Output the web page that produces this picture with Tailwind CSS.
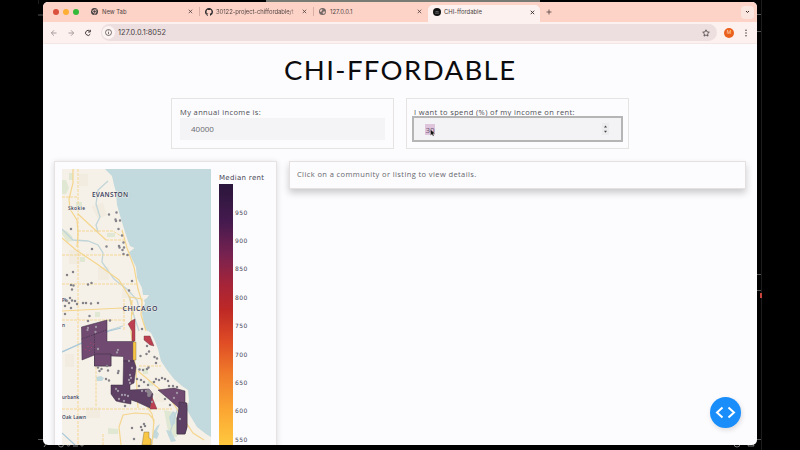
<!DOCTYPE html>
<html lang="en">
<head>
<meta charset="utf-8">
<title>CHI-ffordable</title>
<script src="https://cdn.jsdelivr.net/npm/@tailwindcss/browser@4"></script>
</head>
<body class="relative h-[450px] w-[800px] overflow-hidden bg-black font-['Lato',sans-serif]">
<!-- desktop edges behind the window -->
<svg class="absolute inset-0" width="800" height="450" viewBox="0 0 800 450" fill="none">
  <path d="M266 1H540" stroke="#777b74" stroke-width="2"/>
  <path d="M38 15h5M757 14.500h5M757 31.500h5M757 274.500h5M757 290.500h5M757 439.500h5M38 439.500h5" stroke="#555"/>
  <path d="M761.500 0V450M38.500 0V4" stroke="#1c1c1c"/>
  <path d="M760 293h2v5h-2z" fill="#c8433c"/>
  <g stroke="#8a8a8a" stroke-width=".9"><circle cx="61" cy="444.500" r="2.500"/><circle cx="68.500" cy="444.500" r="1.500"/><path d="M73 446h5M74 444h4M44 447l2-3"/><circle cx="82" cy="444.500" r="1.500"/><circle cx="737" cy="444" r="3"/><path d="M748 446h6l-1-3h-4z"/></g>
</svg>

<div class="relative mt-[2px] ml-[43px] flex h-[443px] w-[714px] flex-col overflow-hidden rounded-[5px] bg-[#fcfcfe]">
  <!-- tab strip -->
  <div class="flex h-[20px] shrink-0 items-center bg-[#fdd3c8] font-['Inter',sans-serif] text-[5.900px] text-[#4d3f3e]">
    <div class="flex w-[48px] gap-[4px] pl-[10px]">
      <span class="size-[6px] rounded-full bg-[#db4f3d]"></span>
      <span class="size-[6px] rounded-full bg-[#fdae34]"></span>
      <span class="size-[6px] rounded-full bg-[#35b93a]"></span>
    </div>
    <div class="flex w-[114px] items-center">
      <svg width="7" height="7" viewBox="0 0 14 14"><circle cx="7" cy="7" r="7" fill="#423d3e"/><circle cx="7" cy="7" r="3.800" fill="#fdd3c8"/><circle cx="7" cy="7" r="2.500" fill="#423d3e"/><path d="M7 3.500h6M4 8.500L1 3.500M10 8.500L7 14" stroke="#fdd3c8" stroke-width="1"/></svg>
      <span class="ml-[4px] grow pt-px">New Tab</span>
      <svg class="mr-[6px]" width="5" height="5" viewBox="0 0 5 5"><path d="M.7.7l3.500 3.500M4.200.7L.7 4.200" stroke="#51413f" stroke-width=".8"/></svg>
      <span class="mr-[5px] h-[9px] w-px bg-[#d9afa5]"></span>
    </div>
    <div class="flex w-[114px] items-center">
      <svg width="8" height="8" viewBox="0 0 16 16"><path fill="#28272a" d="M8 0C3.580 0 0 3.580 0 8c0 3.540 2.290 6.530 5.470 7.590.4.070.55-.17.55-.38v-1.490c-2.010.37-2.530-.49-2.690-.94-.09-.23-.48-.94-.82-1.130-.28-.15-.68-.52-.01-.53.63-.01 1.080.58 1.230.82.72 1.210 1.870.87 2.330.66.07-.52.28-.87.51-1.070-1.780-.2-3.640-.89-3.640-3.950 0-.87.31-1.590.82-2.150-.08-.2-.36-1.020.08-2.120 0 0 .67-.21 2.200.82a7.500 7.500 0 014 0c1.530-1.040 2.200-.82 2.200-.82.44 1.100.16 1.920.08 2.120.51.56.82 1.270.82 2.150 0 3.070-1.870 3.750-3.650 3.950.29.25.54.73.54 1.480v2.200c0 .21.150.46.55.38A8 8 0 0016 8c0-4.420-3.580-8-8-8z"/></svg>
      <span class="ml-[3px] w-[81px] whitespace-nowrap bg-gradient-to-r from-[#4d3f3e] from-90% to-[#fdd3c8] bg-clip-text pt-px tracking-[-0.050px] text-transparent">30122-project-chiffordable/t</span>
      <svg class="mr-[6px] ml-auto" width="5" height="5" viewBox="0 0 5 5"><path d="M.7.7l3.500 3.500M4.200.7L.7 4.200" stroke="#51413f" stroke-width=".8"/></svg>
      <span class="mr-[5px] h-[9px] w-px bg-[#d9afa5]"></span>
    </div>
    <div class="flex w-[109px] items-center">
      <svg width="7" height="7" viewBox="0 0 14 14"><circle cx="7" cy="7" r="7" fill="#746766"/><path d="M2 4l4-2 1 2-2 3-3 1zM9 7l4 0-2 4-3 1-1-3z" fill="#e7c5bc"/></svg>
      <span class="ml-[4px] grow pt-px">127.0.0.1</span>
      <svg class="mr-[6px]" width="5" height="5" viewBox="0 0 5 5"><path d="M.7.7l3.500 3.500M4.200.7L.7 4.200" stroke="#51413f" stroke-width=".8"/></svg>
    </div>
    <div class="mt-[3px] flex h-[17px] w-[112px] items-center rounded-t-[5px] bg-[#fcf1ef] pb-[3px] pl-[5px]">
      <svg width="8" height="8" viewBox="0 0 8 8"><circle cx="4" cy="4" r="4" fill="#111"/><path d="M2 5.200h4M2.300 4.200l1-1 .8 1 .8-1 .8 1" stroke="#aaa" stroke-width=".5" fill="none"/></svg>
      <span class="ml-[3px] grow pt-px">CHI-ffordable</span>
      <svg class="mr-[5px]" width="5" height="5" viewBox="0 0 5 5"><path d="M.7.7l3.500 3.500M4.200.7L.7 4.200" stroke="#332b2b" stroke-width=".9"/></svg>
    </div>
    <svg class="ml-[6px]" width="6" height="6" viewBox="0 0 6 6"><path d="M3 .5v5M.5 3h5" stroke="#51413f" stroke-width=".8"/></svg>
    <span class="mr-[3px] ml-auto flex size-[13px] items-center justify-center rounded-[4px] bg-[#fbe5df]"><svg width="5" height="4" viewBox="0 0 5 4"><path d="M1 1l1.500 1.500L4 1" fill="none" stroke="#332b2b"/></svg></span>
  </div>
  <!-- toolbar -->
  <div class="flex h-[22px] shrink-0 items-center border-b border-[#f4e6e4] bg-[#fcf1ef]">
    <svg class="ml-[7px] shrink-0" width="43" height="8" viewBox="0 0 43 8" fill="none" stroke-width=".8"><path d="M6.500 4h-5M4 1.300L1.300 4 4 6.700M18.500 4h5M21 1.300L23.700 4 21 6.700" stroke="#95898a"/><path d="M40 2.300A2.500 2.500 0 1040.300 5M40.300.8v2.200h-2.200" stroke="#453c3d" stroke-width="1"/></svg>
    <div class="ml-[8px] flex h-[17px] w-[616px] shrink-0 items-center rounded-full bg-[#eddfe0] pl-[1px]">
      <span class="flex size-[13px] items-center justify-center rounded-full bg-[#fcf4f3]"><svg width="7" height="7" viewBox="0 0 7 7"><circle cx="3.500" cy="3.500" r="3" fill="none" stroke="#453c3d" stroke-width=".7"/><path d="M3.500 3v2.200M3.500 1.500v.8" stroke="#453c3d" stroke-width=".7"/></svg></span>
      <span class="ml-[3px] grow pt-px font-['Inter',sans-serif] text-[7.300px] text-[#463c3e]">127.0.0.1:8052</span>
      <svg class="mr-[7px]" width="8" height="8" viewBox="0 0 8 8"><path d="M4 .8l1 2.100 2.300.3-1.700 1.600.4 2.300L4 6l-2 1.100.4-2.300L.7 3.200 3 2.900z" fill="none" stroke="#453c3d" stroke-width=".8"/></svg>
    </div>
    <span class="ml-[7px] flex size-[10px] shrink-0 items-center justify-center rounded-full bg-[#ea601d] font-['Inter',sans-serif] text-[5px] text-[#ffd9b8]">M</span>
    <svg class="ml-[10px] shrink-0" width="4" height="8" viewBox="0 0 4 8" fill="#453c3d"><circle cx="2" cy="1.200" r=".75"/><circle cx="2" cy="4" r=".75"/><circle cx="2" cy="6.800" r=".75"/></svg>
  </div>

  <!-- page -->
  <h1 class="mt-[9px] ml-[241px] h-[34px] whitespace-nowrap text-[27.500px] leading-[34px] tracking-[1.400px] text-[#0c0c0e]">CHI-FFORDABLE</h1>
  <div class="mt-[11px] ml-[128px] flex gap-[12px] font-['Open_Sans',sans-serif] text-[7.500px] text-[#4e4e55]">
    <div class="h-[51px] w-[223px] border border-[#e6e3e3] px-[8px] pt-[7px]">
      <div class="h-[12px] whitespace-nowrap leading-[12px] tracking-[0.380px]">My annual income is:</div>
      <div class="flex h-[22px] items-center bg-[#f4f4f6] pl-[11px] text-[8px] text-[#6a6a70]">40000</div>
    </div>
    <div class="h-[51px] w-[223px] border border-[#e6e3e3] px-[7px] pt-[7px]">
      <div class="h-[12px] whitespace-nowrap leading-[12px] tracking-[0.380px]">I want to spend (%) of my income on rent:</div>
      <div class="flex h-[22px] items-center justify-between bg-[#f3f3f5] pr-[12px] pl-[11px] outline-2 outline-[#b5b5b6]">
        <span class="relative bg-[#dfc5dc] px-[0.500px] text-[8px] leading-[11px] text-[#6a5472]">30<svg class="absolute top-[5px] left-[5px]" width="6" height="8" viewBox="0 0 6 8"><path d="M.5.5v6l1.500-1.300 1 2 1-.5-.9-2 2-.1z" fill="#111" stroke="#fff" stroke-width=".3"/></svg></span>
        <svg class="bg-[#ececee]" width="7" height="12" viewBox="0 0 7 12" fill="#444"><path d="M2 4.500l1.500-2L5 4.500zM2 7.700l1.500 2L5 7.700z"/></svg>
      </div>
    </div>
  </div>

  <div class="mt-[12px] flex items-start gap-[12px] pl-[11px]">
    <div class="flex h-[310px] w-[223px] shrink-0 border border-[#e8e3e3] bg-[#fcfcfe] pt-[7px] pl-[7px] shadow-[0_1px_6px_#0002]">
      <svg class="shrink-0" width="149" height="276" viewBox="62 169 149 276" font-family="Open Sans, sans-serif">
        <path fill="#f6f1e8" d="M62 169h149v276H62z"/>
        <g fill="#e0e8d3"><path d="M62 180h4l3 8-3 6h-4zM62 230l5 1 5 5 1 5-6 1-5-8zM76 202h6v5h-6zM107 233h8v4h-8zM80 257h5v5h-5zM69 173h4v7h-4zM95 312h5v5h-5zM143 368h5v6h-5zM148 381h5v5h-5zM108 428l10 1v5h-10zM164 410l9 2 6 10-2 15h-8z"/></g>
        <g fill="#f1ebe0"><path d="M79 174h9v12h-9zM91 206l12-3 4 12-9 4zM69 250h11v14H69zM98 267h11v13H98zM122 289h9v9h-9zM65 354h9v13h-9zM86 407h14v11H86zM155 393h9v9h-9z"/></g>
        <path fill="#c2d9dd" d="M105 169L112 176 114 185 116 192 117 205 121 219 125 232 128 241 130 246 134.500 248 132 250 129 252 132 259 136 267 137 278 142 288 143 295 149 295 147 298 144 300 145 304 141 308 143 319 145 329 151 333 155 341 158 349 161 361 167 370 174 379 182 386 188 390 189 400 187 410 191 417 197 427 206 434 211 437V169z"/>
        <path fill="#c2d9dd" d="M96 377l5-1 3 2-2 3-5 0zM154 431l3-5 3-2-3 7 2 3-2 5-5-2zM169 417l4-6 3 2-1 11-4 2zM166 430l5 1 5 10-5 1z"/>
        <g fill="none" stroke="#c1d5d8" stroke-width="1.300"><path d="M108 181l-10 9-2 14 4 13-4 8 2 7M62 229l11 11 15 1 10 4 5 8-1 9 12 17 14 11 9 10 2 8M62 352l31-14 17-8 13-4M155 430l-4 15M169 436l8-26 4-5M129 296l5 20 5 15"/></g>
        <g fill="none" stroke="#f4d58d" stroke-width="1.200">
          <path d="M73 169v14l-4 16 1 10 7 11 1 14-1 13M62 238l14 12 21 14 22 16 11 18 3 17M122 230l5 18 7 19 4 22 4 13-1 13 5 16M62 311l60-3 11 2 9-1M132 300l-1 32 5 39 2 37M138 371l13 11 18 15 10 15 14 21 11 7M121 445l-2-18 4-12 12-2 14 1 5 6-2 25M154 424l-2-10-10-15M130 297l12 2v13"/>
          <path d="M78 214l14 13 14 13"/>
          <path stroke-width=".9" stroke-dasharray="3 1" d="M78 169v276M62 197h16M78 231h35l8 5M106 240h18M62 255h67M62 284h75M124 299v32M62 409h110M96 331v76M103 434v11M139 366h22M62 320h63"/>
        </g>
        <path fill="none" stroke="#a9c9da" stroke-width="1.200" d="M62 352l31-14 16-7 12-3M62 433l13 12"/>
        <g fill="#704a70" stroke="#382e43" stroke-width=".5">
          <path d="M81.500 327L107 320V341.500L134 341.500V361H123.500V356.500L111 356V366H94.500V355L82 360z"/>
          <path d="M94.500 354H111V366H94.500z"/>
          <path fill="#5d4064" d="M123.500 361H134L136 367 134 383 130 385 130 390 149 389 153 394 150 408 137 402 131 400 131 404 120 402 116 401 111 394V385H123z"/>
          <path d="M158 390L174 388 185 391V402L187 405V427L185 434H177V418L179 415V408L171 401z"/>
          <path fill="#5d4064" d="M179 408V402L187 403V427L185 434H177V418z"/>
        </g>
        <path d="M94.500 334V354M81.500 339l25-9" stroke="#382e43" stroke-width=".6" stroke-dasharray="1.500 1"/>
        <g fill="#bd4050" stroke="#643743" stroke-width=".4"><path d="M128 324l3-3 4-2v22h-3v-10zM144 336l6 0 4 10-4-1-6-5zM152 397l5 12h-7z"/></g>
        <g fill="#f8c645" stroke="#7b643e" stroke-width=".4"><path d="M133 342h3v18h-3zM144 432h5v6l2 1v6h-9z"/></g>
        <path fill="none" stroke="#85838a" stroke-width="2.500" stroke-linecap="round" d="M109 214.500h.01M116.500 212.500h.01M115.500 219.500h.01M120 220.500h.01M116 221h.01M71 229h.01M118.500 229h.01M122 235.500h.01M123.500 242.500h.01M119 246h.01M106.500 246.500h.01M119.500 247.500h.01M124 247.500h.01M92 249h.01M122.500 250h.01M123.500 254h.01M127.500 255h.01M73 272h.01M67 275h.01M132 281h.01M88 284.500h.01M91.500 283h.01M71 285h.01M73.500 285.500h.01M72 289.500h.01M129 290.500h.01M64 300h.01M67 301h.01M70 298h.01M72 300.500h.01M75 301h.01M69 303h.01M65 306h.01M71 308h.01M77 304h.01M83 303h.01M86 303h.01M91 303.500h.01M98 303h.01M65 314h.01M89.500 316h.01M88 321h.01M110 320.500h.01M142 329h.01M98 349h.01M147 346h.01M140.500 356h.01M146.500 354h.01M149 351.500h.01M154.500 357h.01M157 358.500h.01M156 363h.01M139.500 369.500h.01M143 370h.01M147 369h.01M148.500 367.500h.01M98 367.500h.01M101.500 369h.01M99.500 371h.01M107 366h.01M108 370.500h.01M118.500 371h.01M118 373h.01M106 379h.01M109 380.500h.01M137 379h.01M141 380h.01M139 386h.01M144 382h.01M148 385h.01M154 382h.01M156 379h.01M159 380h.01M162 378h.01M165 379h.01M168 381h.01M169 386h.01M173 386h.01M177 387h.01M125 406h.01M165 399h.01M170 405h.01M132 428h.01M141 427h.01M144 424h.01M145 426h.01M142 430h.01M134 439h.01"/>
        <path fill="none" stroke="#a196a5" stroke-width="2.300" stroke-linecap="round" d="M88 328h.01M87.500 330h.01M96 327h.01M95.500 332h.01M98 349h.01M118 350h.01M117 352.500h.01M130 375h.01M131 378h.01M130 383h.01M129 361h.01M129 380h.01M116 389h.01M118 391h.01M122 395h.01M125 395h.01M128 396h.01M119 399h.01M124 401h.01M142 391h.01M146 391h.01M152 402h.01M174 398h.01M180 419h.01M177 393h.01M132 368h.01"/>
        <path fill="none" stroke="#8d838f" stroke-width="4" stroke-linecap="round" d="M148 391l2 2M149 395h.01"/>
        <path fill="none" stroke="#c04162" stroke-width="1" stroke-dasharray="1 3" d="M85 350l7-8M89 351l6-8"/>
        <g fill="#343b5c" stroke="#f6f1e8" stroke-width=".8" paint-order="stroke" font-weight="600">
          <text x="92" y="197" font-size="6.500" textLength="36">EVANSTON</text>
          <text x="68" y="210" font-size="4.800" textLength="17">Skokie</text>
          <text x="122.500" y="311" font-size="7" textLength="35">CHICAGO</text>
          <text x="62" y="399" font-size="4.800" textLength="17">urbank</text>
          <text x="62" y="419" font-size="4.800" textLength="24">Oak Lawn</text>
          <text x="62" y="302" font-size="4.500">Pk</text>
          <text x="62" y="327" font-size="4.800">n</text>
        </g>
      </svg>
      <div class="ml-[8px] font-['DejaVu_Sans',sans-serif] text-[#474554]">
        <div class="h-[15px] whitespace-nowrap pt-[3px] text-[7px] leading-[12px] tracking-[0.310px]">Median rent</div>
        <div class="flex">
          <div class="h-[284px] w-[14px] bg-[linear-gradient(#2a163b_0px,#451a4e_38px,#762250_70px,#a52439_100px,#bd2826_125px,#df4c25_158px,#f07c2a_190px,#fba532_225px,#ffc83e_261px)]"></div>
          <div class="ml-[2px] flex flex-col pt-[14.500px] text-[6px] leading-[28.400px] tracking-[0.400px]">
            <span>950</span><span>900</span><span>850</span><span>800</span><span>750</span><span>700</span><span>650</span><span>600</span><span>550</span>
          </div>
        </div>
      </div>
    </div>
    <div class="flex h-[28px] w-[457px] items-center border border-[#e5e1e1] bg-[#fcfcfe] pl-[7px] font-['Open_Sans',sans-serif] text-[7.500px] tracking-[0.400px] whitespace-nowrap text-[#66666d] shadow-[0_4px_7px_#0003]">Click on a community or listing to view details.</div>
  </div>
  <button class="absolute right-[16.500px] bottom-[17px] flex size-[31px] items-center justify-center rounded-full bg-[#198efb] shadow-[1px_2px_5px_#0002]" aria-label="Debug menu">
    <svg width="21" height="13" viewBox="0 0 21 13" fill="none" stroke="#fff" stroke-width="2"><path d="M7.500 1.500l-5.500 5 5.500 5M13.500 1.500l5.500 5-5.500 5"/></svg>
  </button>
</div>
</body>
</html>
